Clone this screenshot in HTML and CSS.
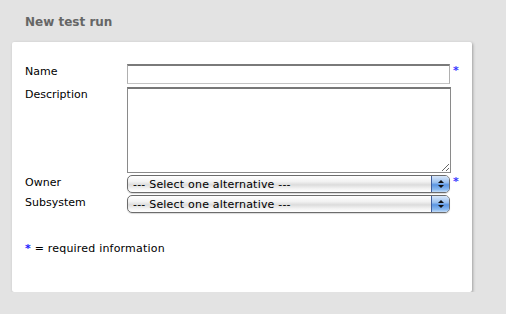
FILE: index.html
```html
<!DOCTYPE html>
<html lang="en">
<head>
    <meta charset="UTF-8">
    <title>New test run</title>
    <link rel="stylesheet" href="styles.css">
</head>
<body>

    <h2 class="page-title">New test run</h2>

    <div class="panel">
        <form class="run-form">
            <label class="field-label" for="name">Name</label>
            <input class="text-input" type="text" id="name">
            <span class="required">*</span>

            <label class="field-label desc-label" for="description">Description</label>
            <textarea class="text-area" id="description"></textarea>
            <span></span>

            <label class="field-label" for="owner">Owner</label>
            <div class="select-box">
                <select id="owner">
                    <option>--- Select one alternative ---</option>
                </select>
                <span class="spinner"><i class="up"></i><i class="down"></i></span>
            </div>
            <span class="required">*</span>

            <label class="field-label" for="subsystem">Subsystem</label>
            <div class="select-box">
                <select id="subsystem">
                    <option>--- Select one alternative ---</option>
                </select>
                <span class="spinner"><i class="up"></i><i class="down"></i></span>
            </div>
            <span></span>
        </form>

        <p class="legend"><span class="required-mark">*</span> = required information</p>
    </div>

</body>
</html>
```

FILE: styles.css
```css
body {
    font-family: "DejaVu Sans", Verdana, sans-serif;
    font-size: 11px;
    background-color: #e3e3e3;
    margin: 0;
    padding: 0 34px 0 12px;
    color: #000;
}
.page-title {
    font-size: 12px;
    font-weight: bold;
    color: #666;
    margin: 0;
    padding: 15px 0 0 13px;
    height: 42px;
    box-sizing: border-box;
}
.panel {
    background: white;
    border-radius: 2px;
    box-shadow: 1px 1px 3px rgba(0, 0, 0, 0.3);
    padding: 22px 13px 0 13px;
    height: 250px;
    box-sizing: border-box;
}
.run-form {
    display: grid;
    grid-template-columns: 102px 324px 20px;
    align-items: start;
}
.field-label {
    padding-top: 1px;
    line-height: 13px;
}
.desc-label {
    padding-top: 4px;
}
.text-input {
    height: 20px;
    box-sizing: border-box;
    margin: 0;
    border: 1px solid #c4c4c4;
    border-top: 2px solid #7a7a7a;
    border-left-color: #b0b0b0;
    border-right-color: #b0b0b0;
    font: inherit;
    width: 323px;
}
.text-area {
    height: 86px;
    box-sizing: border-box;
    margin: 3px 0 2px 0;
    border: 1px solid #8a8a8a;
    border-top: 2px solid #777;
    font: inherit;
    width: 324px;
    resize: both;
}
.required {
    color: #3838ff;
    font-weight: bold;
    padding: 1px 0 0 2px;
    line-height: 12px;
}
.select-box {
    display: flex;
    width: 323px;
    height: 18px;
    box-sizing: border-box;
    border: 1px solid #6c6c6c;
    border-radius: 5px;
    background: linear-gradient(#ffffff, #f2f2f2 35%, #dcdcdc 55%, #f4f4f4 80%, #ffffff);
    overflow: hidden;
    margin-bottom: 2px;
    box-shadow: 0 1px 1px rgba(0, 0, 0, 0.15);
}
.select-box select {
    flex: 1;
    appearance: none;
    border: none;
    background: transparent;
    font: inherit;
    letter-spacing: 0.2px;
    padding: 0 0 0 5px;
    margin: 0;
    height: 16px;
    color: #000;
}
.spinner {
    width: 17px;
    display: flex;
    flex-direction: column;
    align-items: center;
    justify-content: center;
    gap: 2px;
    border-left: 1px solid #3f5d9c;
    background: linear-gradient(#d8e7fa, #9cc1ef 40%, #5b95e2 55%, #8dbbf0 85%, #c4dcf7);
}
.spinner i {
    width: 0;
    height: 0;
    border-left: 3px solid transparent;
    border-right: 3px solid transparent;
}
.spinner .up {
    border-bottom: 3px solid #111;
}
.spinner .down {
    border-top: 3px solid #111;
}
.legend {
    margin: 27px 0 0 0;
    letter-spacing: 0.2px;
}
.required-mark {
    color: #2020ff;
    font-weight: bold;
}
```
